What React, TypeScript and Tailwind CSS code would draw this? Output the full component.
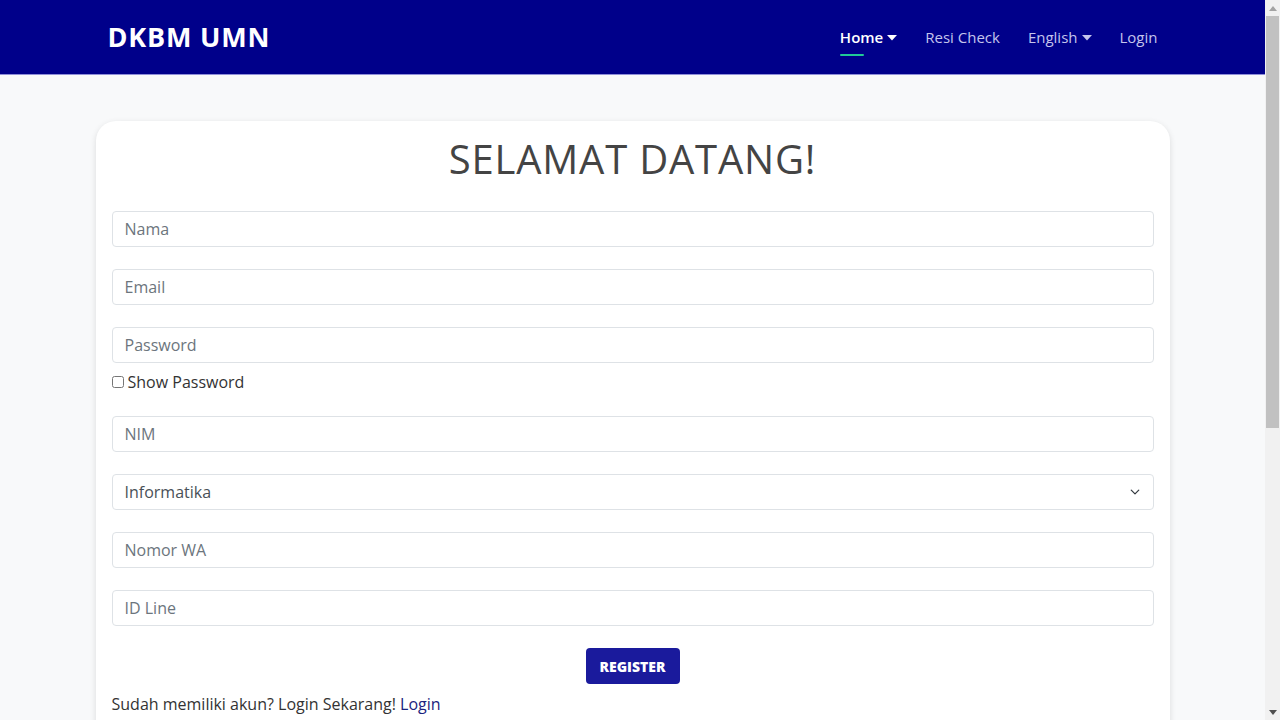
import React, { useState } from "react";

const fields = ["Nama", "Email", "Password"];

const Caret = () => (
  <svg width="10" height="6" viewBox="0 0 10 6" className="ml-[4px] mt-[1px]" fill="currentColor">
    <path d="M0 0h10L5 5.5z" />
  </svg>
);

// browser-style vertical scrollbar beside the page
const Scrollbar = () => (
  <div className="w-[15px] shrink-0 h-full bg-[#f1f1f1] flex flex-col items-center">
    <div className="h-[16px] flex items-center justify-center">
      <svg width="8" height="5" viewBox="0 0 8 5" fill="#a3a3a3">
        <path d="M0 5L4 0l4 5z" />
      </svg>
    </div>
    <div className="w-[13px] h-[412px] bg-[#c1c1c1]" />
    <div className="flex-1" />
    <div className="h-[16px] flex items-center justify-center">
      <svg width="8" height="5" viewBox="0 0 8 5" fill="#505050">
        <path d="M0 0h8L4 5z" />
      </svg>
    </div>
  </div>
);

export default function App() {
  const [show, setShow] = useState(false);

  const inputCls =
    "w-full h-[36px] px-[12px] border border-[#dee2e6] rounded-[4px] text-[16px] text-[#495057] placeholder:text-[#6c757d] bg-white outline-none";

  return (
    <div className="h-screen flex overflow-hidden font-['Open_Sans',sans-serif]">
      <div className="flex-1 overflow-hidden bg-[#f8f9fa]">
        <nav className="h-[75px] bg-[#00008a] border-b border-[#8f8fd8]">
          <div className="mx-auto w-[1050px] h-full flex items-center justify-between">
            <span className="text-white text-[27px] font-bold tracking-[0.8px]">
              DKBM UMN
            </span>
            <ul className="flex items-center gap-[28px] text-[15px] font-medium text-[#c4c4ec]">
              <li className="relative flex items-center text-white font-semibold">
                Home
                <Caret />
                <span className="absolute left-0 top-[28px] w-[24px] h-[2px] bg-[#20c997] rounded" />
              </li>
              <li>Resi Check</li>
              <li className="flex items-center">
                English
                <Caret />
              </li>
              <li>Login</li>
            </ul>
          </div>
        </nav>

        <div className="pt-[46px] pb-[200px]">
          <div className="mx-auto w-[1074px] bg-white rounded-[20px] shadow-[0_2px_6px_rgba(0,0,0,0.12)] px-[16px] pt-[14px] pb-[40px]">
            <h1 className="text-center text-[40px] leading-[48px] text-[#444] tracking-[0.8px]">
              SELAMAT DATANG!
            </h1>

            <form className="mt-[28px] flex flex-col">
              <input className={inputCls} placeholder={fields[0]} />
              <input className={inputCls + " mt-[22px]"} placeholder={fields[1]} />
              <input
                className={inputCls + " mt-[22px]"}
                type={show ? "text" : "password"}
                placeholder={fields[2]}
              />
              <label className="mt-[7px] flex items-center gap-[4px] text-[16px] text-[#333]">
                <input
                  type="checkbox"
                  className="w-[12px] h-[12px]"
                  checked={show}
                  onChange={() => setShow(!show)}
                />
                Show Password
              </label>
              <input className={inputCls + " mt-[22px]"} placeholder="NIM" />
              <div className="relative mt-[22px]">
                <select className={inputCls + " appearance-none text-[#212529]"} defaultValue="Informatika">
                  <option>Informatika</option>
                  <option>Sistem Informasi</option>
                  <option>Teknik Komputer</option>
                </select>
                <svg
                  className="absolute right-[13px] top-[13px] pointer-events-none"
                  width="12"
                  height="10"
                  viewBox="0 0 16 16"
                  fill="none"
                  stroke="#343a40"
                  strokeWidth="2"
                  strokeLinecap="round"
                  strokeLinejoin="round"
                >
                  <path d="M2 5l6 6 6-6" />
                </svg>
              </div>
              <input className={inputCls + " mt-[22px]"} placeholder="Nomor WA" />
              <input className={inputCls + " mt-[22px]"} placeholder="ID Line" />

              <div className="mt-[22px] flex justify-center">
                <button
                  type="button"
                  className="w-[94px] h-[36px] bg-[#1a1a9c] text-white text-[14px] font-extrabold rounded-[4px] uppercase"
                >
                  Register
                </button>
              </div>
              <p className="mt-[8px] text-[16px] text-[#333]">
                Sudah memiliki akun? Login Sekarang!{" "}
                <a href="#" className="text-[#1a237e]">
                  Login
                </a>
              </p>
            </form>
          </div>
        </div>
      </div>
      <Scrollbar />
    </div>
  );
}
